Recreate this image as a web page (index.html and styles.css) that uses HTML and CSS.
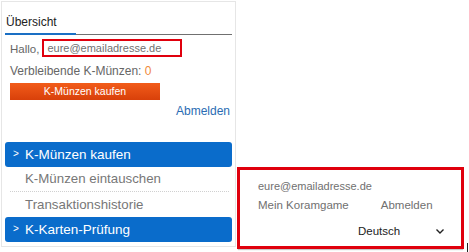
FILE: index.html
```html
<!DOCTYPE html>
<html lang="de">
<head>
<meta charset="utf-8">
<link rel="stylesheet" href="styles.css">
</head>
<body>
<div class="page">
  <aside class="panel">
    <div class="tabs">
      <span class="tab active">Übersicht</span>
    </div>
    <div class="account">
      <div class="hello">Hallo, <span class="mailbox">eure@emailadresse.de</span></div>
      <div class="coins">Verbleibende K-Münzen: <span class="count">0</span></div>
      <button class="buy">K-Münzen kaufen</button>
      <div class="logout-row"><a class="logout">Abmelden</a></div>
    </div>
    <nav class="menu">
      <a class="menu-head"><span class="chev">&gt;</span>K-Münzen kaufen</a>
      <a class="menu-sub dotted">K-Münzen eintauschen</a>
      <a class="menu-sub">Transaktionshistorie</a>
      <a class="menu-head"><span class="chev">&gt;</span>K-Karten-Prüfung</a>
    </nav>
  </aside>
  <section class="userbox">
    <div class="ub-mail">eure@emailadresse.de</div>
    <div class="ub-links"><span>Mein Koramgame</span><span>Abmelden</span></div>
    <div class="ub-lang"><span>Deutsch</span>
      <svg class="caret" width="8" height="5" viewBox="0 0 8 5"><path d="M0.5 0.5 L4 4 L7.5 0.5" fill="none" stroke="#222" stroke-width="1.4"/></svg>
    </div>
  </section>
  <span class="cursor"></span>
</div>
</body>
</html>
```

FILE: styles.css
```css
* { box-sizing: border-box; }
html, body { margin: 0; padding: 0; background: #fff; }
body {
  font-family: "Liberation Sans", Arial, sans-serif;
  font-size: 12px;
  color: #666;
  width: 469px;
  height: 252px;
  overflow: hidden;
}
.page {
  display: flex;
  align-items: flex-start;
  padding: 1px 0 0 1px;
  position: relative;
  height: 252px;
}
.panel {
  width: 235px;
  height: 246px;
  border: 1px solid #e6e6e6;
  padding: 0 3px 0 3px;
  display: flex;
  flex-direction: column;
  flex-shrink: 0;
}
.tabs {
  margin-top: 11px;
  height: 22px;
  border-bottom: 1px solid #707070;
  display: flex;
  align-items: flex-start;
}
.tab {
  color: #222;
  font-size: 12px;
  padding: 2px 0 0 1px;
  width: 71px;
  height: 22px;
  line-height: 14px;
}
.tab.active { border-bottom: 2px solid #1a6fc4; }
.account { padding: 4px 0 0 5px; }
.hello { height: 20px; line-height: 20px; display: flex; color: #666; font-size: 11.5px; }
.mailbox {
  margin-left: 3px;
  border: 2px solid #e0000d;
  height: 18px;
  width: 140px;
  line-height: 14px;
  padding-left: 3px;
  color: #707070;
  font-size: 11px;
}
.coins { margin-top: 3px; height: 18px; line-height: 18px; }
.count { color: #f08a3c; }
.buy {
  display: block;
  margin-top: 3px;
  width: 150px;
  height: 17px;
  border: 0;
  padding: 0;
  font-family: inherit;
  font-size: 10.5px;
  color: #fff;
  background: linear-gradient(#f25c1a, #d8400a);
  line-height: 17px;
}
.logout-row { display: flex; justify-content: flex-end; margin-top: 3px; height: 16px; padding-right: 2px; }
.logout { color: #2a6cb3; font-size: 12px; line-height: 16px; }
.menu { margin-top: 23px; display: flex; flex-direction: column; }
.menu-head {
  display: flex;
  align-items: center;
  height: 25px;
  background: #0a6ccb;
  border-radius: 3px;
  color: #fff;
  font-size: 13.5px;
  padding-left: 8px;
}
.chev { font-size: 10px; width: 12px; position: relative; top: -1px; }
.menu-sub {
  display: block;
  height: 25px;
  line-height: 25px;
  padding-left: 20px;
  color: #777;
  font-size: 13.3px;
}
.menu-sub.dotted {
  border-bottom: 1px dotted #d0d0d0;
  line-height: 24px;
  margin: 0 3px 0 5px;
  padding-left: 15px;
}
.userbox {
  margin-top: 166px;
  margin-left: 1px;
  width: 227px;
  height: 82px;
  border: 3px solid #e0000d;
  padding: 7px 0 0 18px;
  color: #707070;
  font-size: 11.5px;
  box-shadow: 0 2px 1px -1px #c8c8c8;
}
.ub-mail { height: 18px; line-height: 18px; font-size: 11px; }
.ub-links { height: 20px; line-height: 20px; display: flex; gap: 32px; }
.ub-lang {
  margin-top: 10px;
  padding-left: 100px;
  display: flex;
  align-items: center;
  color: #222;
  gap: 36px;
}
.cursor {
  position: absolute;
  left: 467px;
  top: 243px;
  width: 1px;
  height: 9px;
  background: #222;
}
```
